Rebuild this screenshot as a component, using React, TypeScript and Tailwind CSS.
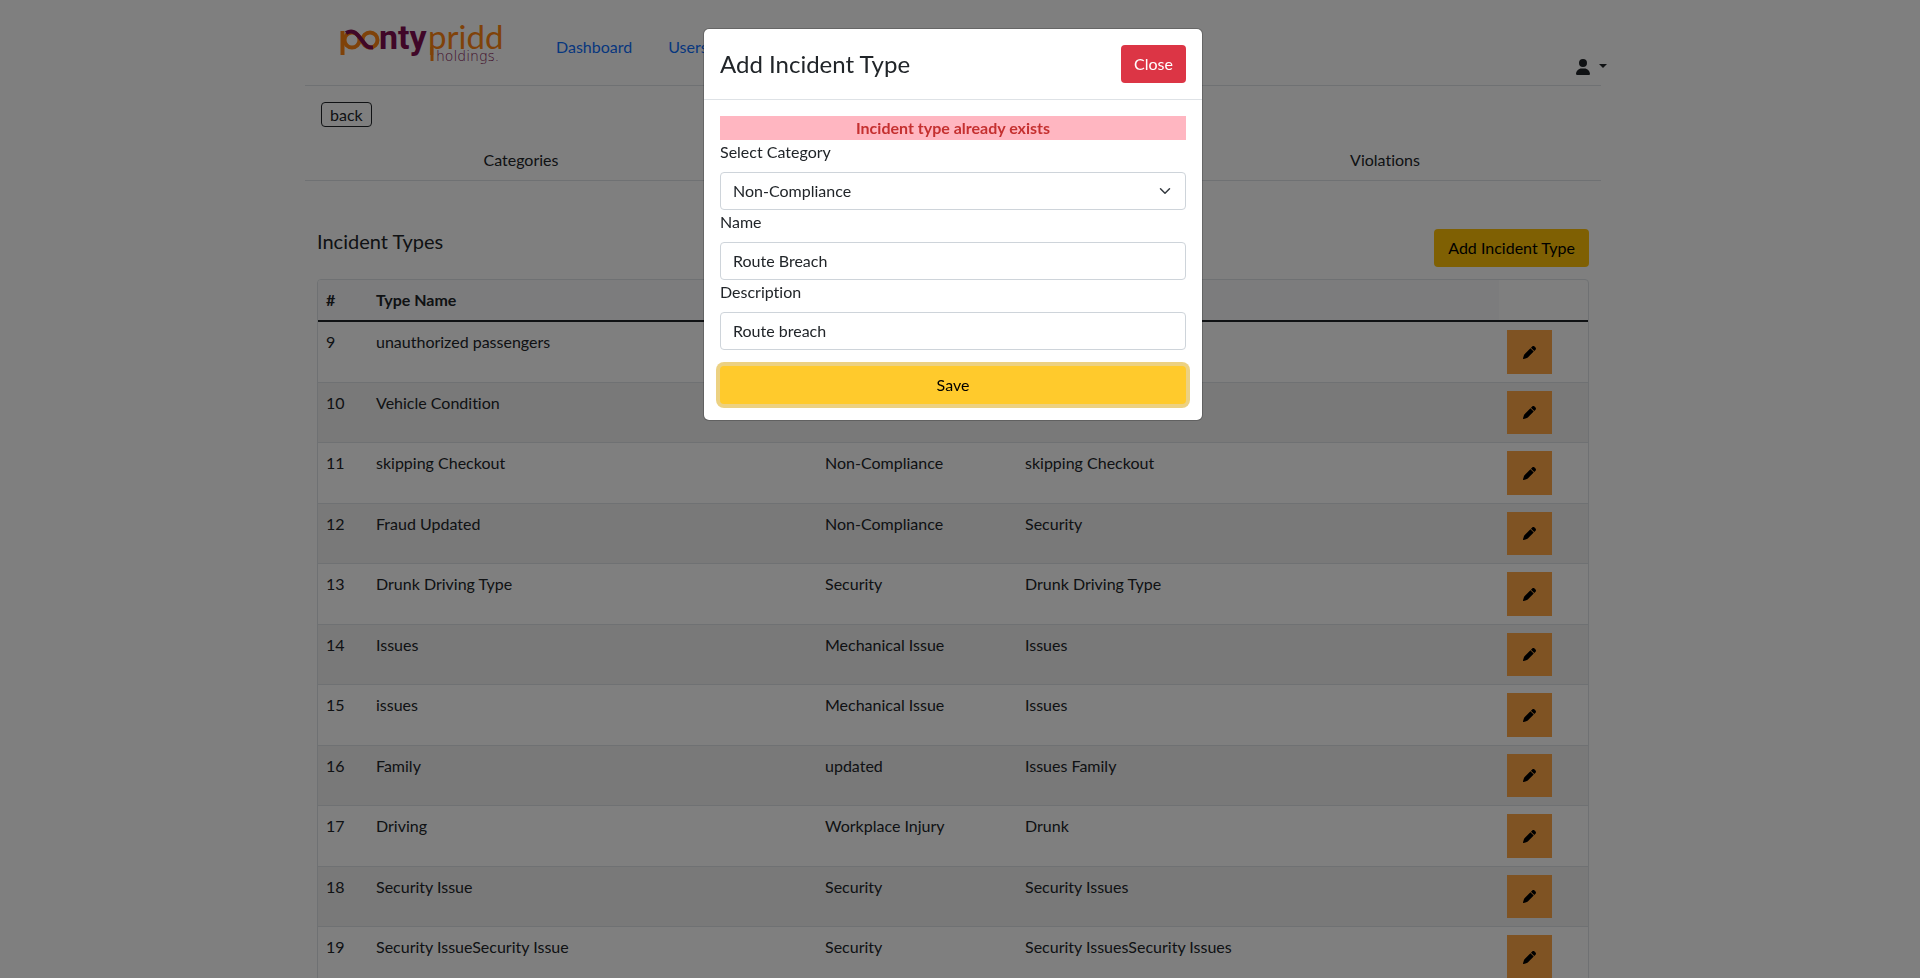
import React from "react";
import { FaPen, FaUser } from "react-icons/fa6";

type IncidentType = {
  id: number;
  name: string;
  category: string;
  description: string;
};

const incidentTypes: IncidentType[] = [
  { id: 9, name: "unauthorized passengers", category: "Non-Compliance", description: "unauthorized passengers" },
  { id: 10, name: "Vehicle Condition", category: "Non-Compliance", description: "Vehicle" },
  { id: 11, name: "skipping Checkout", category: "Non-Compliance", description: "skipping Checkout" },
  { id: 12, name: "Fraud Updated", category: "Non-Compliance", description: "Security" },
  { id: 13, name: "Drunk Driving Type", category: "Security", description: "Drunk Driving Type" },
  { id: 14, name: "Issues", category: "Mechanical Issue", description: "Issues" },
  { id: 15, name: "issues", category: "Mechanical Issue", description: "Issues" },
  { id: 16, name: "Family", category: "updated", description: "Issues Family" },
  { id: 17, name: "Driving", category: "Workplace Injury", description: "Drunk" },
  { id: 18, name: "Security Issue", category: "Security", description: "Security Issues" },
  { id: 19, name: "Security IssueSecurity Issue", category: "Security", description: "Security IssuesSecurity Issues" },
];

function Logo() {
  return (
    <svg width="168" height="56" viewBox="0 0 168 56" role="img" aria-label="Pontypridd Holdings">
      {/* interlocking "po" mark */}
      <g fill="none" strokeWidth="4">
        <path d="M2.500 16V40" stroke="#ff8412" />
        <circle cx="12" cy="25" r="7.500" stroke="#ff8412" />
        <circle cx="30" cy="25" r="7.500" stroke="#ff8412" />
        <path d="M6 18C12 14.500 16 17 21 24S28 33 33 32.500" stroke="#800f50" />
      </g>
      <text x="39" y="34" fill="#800f50" className="font-['Roboto'] text-[34px] font-bold">nty</text>
      <text x="88" y="34" fill="#ff8412" className="font-['Lato'] text-[33px]">pridd</text>
      <path d="M92 32V46" stroke="#ff8412" strokeWidth="3" />
      <text x="96" y="46" fill="#800f50" className="font-['DejaVu_Sans'] text-[14px] font-extralight">holdings.</text>
    </svg>
  );
}

function Header() {
  return (
    <header className="flex h-[86px] items-center border-b border-[#dee2e6] pl-[35px]">
      <a href="#home" className="mr-12">
        <Logo />
      </a>
      <nav className="mt-2 flex flex-1 gap-9 text-[#0d6efd]">
        <a href="#dashboard">Dashboard</a>
        <a href="#users">Users</a>
      </nav>
      <button type="button" aria-label="Account" className="-mr-1.5 mt-12 flex items-center gap-2">
        <FaUser size={16} />
        <span className="mb-0.5 border-x-4 border-t-4 border-x-transparent border-t-[#212529]" />
      </button>
    </header>
  );
}

function Tabs() {
  return (
    <nav className="grid grid-cols-3 border-b border-[#dee2e6] pb-2 pt-[21px] text-center">
      <a href="#categories" className="block">Categories</a>
      <a href="#incident-types" className="block">Incident Types</a>
      <a href="#violations" className="block">Violations</a>
    </nav>
  );
}

function IncidentTable() {
  return (
    <div className="mt-3 overflow-hidden rounded border border-[#dee2e6]">
      <table className="w-full table-fixed border-separate border-spacing-0 text-left">
        <colgroup>
          <col className="w-[50px]" />
          <col />
          <col className="w-[200px]" />
          <col className="w-[482px]" />
          <col className="w-[89px]" />
        </colgroup>
        <thead>
          <tr>
            <th className="border-b-2 border-[#212529] bg-[#f8f9fa] p-2">#</th>
            <th className="border-b-2 border-[#212529] bg-[#f8f9fa] p-2">Type Name</th>
            <th className="border-b-2 border-[#212529] bg-[#f8f9fa] p-2">Category</th>
            <th className="border-b-2 border-[#212529] bg-[#f8f9fa] p-2">Description</th>
            <td className="border-b-2 border-[#212529] p-2" />
          </tr>
        </thead>
        <tbody>
          {incidentTypes.map((t) => (
            <tr key={t.id} className="group even:bg-[#f2f2f2]">
              <td className="border-b border-[#dee2e6] p-2 align-top">{t.id}</td>
              <td className="border-b border-[#dee2e6] p-2 align-top">{t.name}</td>
              <td className="border-b border-[#dee2e6] p-2 align-top">{t.category}</td>
              <td className="border-b border-[#dee2e6] p-2 align-top">{t.description}</td>
              <td className="border-b border-[#dee2e6] p-2 align-top">
                <button
                  type="button"
                  aria-label={`Edit ${t.name}`}
                  className="flex w-[45px] items-center justify-center bg-[#ffa747] text-black group-odd:h-[44px] group-even:h-[43px]"
                >
                  <FaPen size={13} />
                </button>
              </td>
            </tr>
          ))}
        </tbody>
      </table>
    </div>
  );
}

function AddIncidentModal() {
  return (
    <div className="fixed inset-0 bg-black/50 pr-[14px]">
      <div
        role="dialog"
        aria-modal="true"
        aria-labelledby="modal-title"
        className="mx-auto mt-7 max-w-[500px] rounded-md border border-black/20 bg-white bg-clip-padding"
      >
        <div className="flex items-center justify-between border-b border-[#dee2e6] p-4">
          <h2 id="modal-title" className="text-2xl">Add Incident Type</h2>
          <button type="button" className="rounded bg-[#dc3545] px-[13px] py-[7px] text-white">Close</button>
        </div>
        <form className="p-4" onSubmit={(e) => e.preventDefault()}>
          <p role="alert" className="bg-[#ffb6c1] text-center font-bold text-[#c53030]">Incident type already exists</p>
          <label htmlFor="category" className="mb-2 block">Select Category</label>
          <div className="relative">
            <select
              id="category"
              defaultValue="Non-Compliance"
              className="block h-[38px] w-full appearance-none rounded border border-[#ced4da] bg-white px-3"
            >
              <option>Non-Compliance</option>
              <option>Security</option>
              <option>Mechanical Issue</option>
              <option>Workplace Injury</option>
            </select>
            <svg
              viewBox="0 0 16 16"
              className="pointer-events-none absolute right-[15px] top-[13px] size-3"
              fill="none"
              stroke="#343a40"
              strokeWidth="2"
              strokeLinecap="round"
              strokeLinejoin="round"
            >
              <path d="M2 5l6 6 6-6" />
            </svg>
          </div>
          <label htmlFor="name" className="mb-2 block">Name</label>
          <input
            id="name"
            type="text"
            defaultValue="Route Breach"
            className="block h-[38px] w-full rounded border border-[#ced4da] px-3 pb-0.5"
          />
          <label htmlFor="description" className="mb-2 block">Description</label>
          <input
            id="description"
            type="text"
            defaultValue="Route breach"
            className="block h-[38px] w-full rounded border border-[#ced4da] px-3 pb-0.5"
          />
          <button
            type="submit"
            className="mt-4 h-[38px] w-full rounded bg-[#ffca2c] text-black ring-4 ring-[#d9a406]/50"
          >
            Save
          </button>
        </form>
      </div>
    </div>
  );
}

export default function App() {
  return (
    <div className="h-screen overflow-hidden bg-white pr-[14px] font-['Lato','Noto_Sans',sans-serif] text-base text-[#212529] [font-variant-ligatures:none]">
      <div className="mx-auto max-w-[1296px]">
        <Header />
        <div className="px-4 pt-4">
          <button type="button" className="flex h-[25px] items-center rounded border border-[#212529] px-2">back</button>
        </div>
        <Tabs />
        <main className="px-3 pt-12">
          <div className="flex items-start justify-between">
            <h1 className="text-xl leading-6">Incident Types</h1>
            <button type="button" className="rounded bg-[#ffc107] px-3.5 py-[7px] text-black">Add Incident Type</button>
          </div>
          <IncidentTable />
        </main>
      </div>
      <AddIncidentModal />
    </div>
  );
}
